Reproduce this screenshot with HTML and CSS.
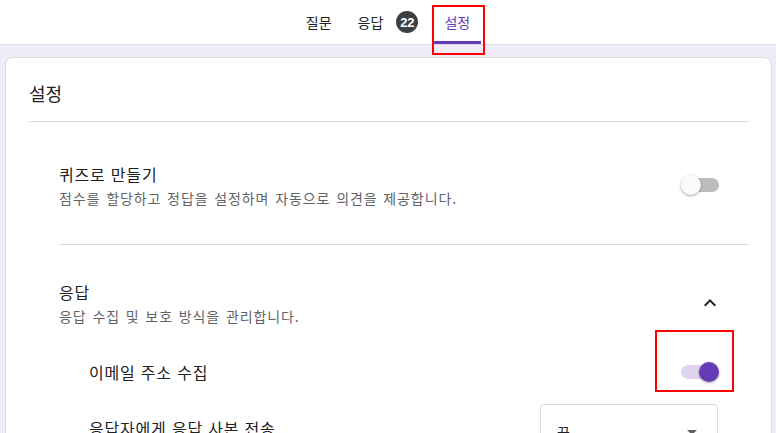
FILE: index.html
```html
<!DOCTYPE html>
<html lang="ko">
<head>
    <meta charset="UTF-8">
    <meta name="viewport" content="width=device-width, initial-scale=1.0">
    <title>설정</title>
    <link rel="stylesheet" href="styles.css">
</head>
<body>
    <header class="tabbar">
      <a class="tab" href="#">질문</a>
      <a class="tab" href="#">응답<span class="badge">22</span></a>
      <a class="tab active" href="#">설정<span class="mark markTab"></span></a>
    </header>

    <main class="page">
      <div class="card">
        <h2 class="cardTitle">설정</h2>

        <section class="section">
          <div class="row">
            <div class="rowText">
              <div class="rowTitle">퀴즈로 만들기</div>
              <div class="rowDesc">점수를 할당하고 정답을 설정하며 자동으로 의견을 제공합니다.</div>
            </div>
            <span class="switch"></span>
          </div>
        </section>

        <section class="section sectionLast">
          <div class="row">
            <div class="rowText">
              <div class="rowTitle">응답</div>
              <div class="rowDesc">응답 수집 및 보호 방식을 관리합니다.</div>
            </div>
            <svg class="chevron" width="24" height="24" viewBox="0 0 24 24">
              <path d="M7.41 15.41 12 10.83l4.59 4.58L18 14l-6-6-6 6z" fill="#202124"/>
            </svg>
          </div>

          <div class="subRow subRowFirst">
            <span class="subTitle">이메일 주소 수집</span>
            <span class="switch on"><span class="mark markSwitch"></span></span>
          </div>

          <div class="subRow">
            <span class="subTitle">응답자에게 응답 사본 전송</span>
            <div class="select">
              <span>끔</span>
              <span class="caret"></span>
            </div>
          </div>
        </section>
      </div>
    </main>
</body>
</html>
```

FILE: styles.css
```css
* {
    box-sizing: border-box;
}

html, body {
    height: 100%;
}

body {
    margin: 0;
    overflow: hidden;
    font-family: "Noto Sans CJK KR", "Noto Sans", sans-serif;
    color: #202124;
    background-color: #f0ebf8;
}

.tabbar {
    height: 45px;
    display: flex;
    justify-content: center;
    gap: 4px;
    background-color: #fff;
    border-bottom: 1px solid #dadce0;
}

.tab {
    position: relative;
    display: flex;
    align-items: center;
    padding: 0 11px;
    font-size: 14px;
    color: #202124;
    text-decoration: none;
    border-bottom: 3px solid transparent;
    padding-top: 3px;
}

.tab.active {
    color: #673ab7;
    border-bottom-color: #673ab7;
}

.badge {
    display: inline-flex;
    align-items: center;
    justify-content: center;
    width: 22px;
    height: 22px;
    margin-left: 13px;
    border-radius: 50%;
    background-color: #3c4043;
    color: #fff;
    font-family: "Liberation Sans", Arial, sans-serif;
    font-weight: bold;
    font-size: 13px;
}

.mark {
    position: absolute;
    border: 2px solid #f00;
}

.markTab {
    left: -1px;
    right: -4px;
    top: 5px;
    bottom: -14px;
}

.page {
    padding: 12px 4px 0 5px;
}

.card {
    background-color: #fff;
    border: 1px solid #dadce0;
    border-radius: 8px;
    padding: 23px 22px 0 23px;
    height: 400px;
}

.cardTitle {
    margin: 0;
    font-size: 18px;
    font-weight: normal;
    line-height: 24px;
    padding-bottom: 16px;
    border-bottom: 1px solid #dadce0;
}

.section {
    margin-left: 30px;
    padding: 40px 30px 36px 0;
    border-bottom: 1px solid #dadce0;
}

.sectionLast {
    padding-top: 35px;
    border-bottom: none;
}

.row {
    display: flex;
    align-items: center;
    justify-content: space-between;
}

.rowTitle {
    font-size: 16px;
    line-height: 24px;
    letter-spacing: 0.8px;
}

.rowDesc {
    margin-top: 2px;
    font-size: 14px;
    line-height: 20px;
    letter-spacing: 0.9px;
    word-spacing: 1px;
    color: #5f6368;
}

.chevron {
    margin-right: -3px;
}

.switch {
    position: relative;
    display: inline-block;
    width: 38px;
    height: 20px;
}

.switch::before {
    content: "";
    position: absolute;
    left: 4px;
    right: 0;
    top: 3px;
    height: 14px;
    border-radius: 7px;
    background-color: #bdbdbd;
}

.switch::after {
    content: "";
    position: absolute;
    left: 0;
    top: 0;
    width: 20px;
    height: 20px;
    border-radius: 50%;
    background-color: #fafafa;
    box-shadow: 0 1px 3px rgba(0, 0, 0, 0.35);
}

.switch.on::before {
    left: 0;
    right: 4px;
    background-color: #ddd4ee;
}

.switch.on::after {
    left: auto;
    right: 0;
    background-color: #673ab7;
}

.markSwitch {
    left: -26px;
    right: -15px;
    top: -32px;
    bottom: -10px;
}

.subRow {
    display: flex;
    align-items: center;
    justify-content: space-between;
    height: 48px;
    margin-top: 8px;
    padding-left: 30px;
}

.subRowFirst {
    margin-top: 22px;
}

.subTitle {
    font-size: 16px;
    letter-spacing: 0.8px;
}

.select {
    display: flex;
    align-items: center;
    justify-content: space-between;
    width: 178px;
    height: 56px;
    margin-top: 8px;
    margin-right: 1px;
    padding: 0 20px 0 16px;
    border: 1px solid #dadce0;
    border-radius: 4px;
    font-size: 14px;
}

.caret {
    width: 0;
    height: 0;
    border-left: 5px solid transparent;
    border-right: 5px solid transparent;
    border-top: 5px solid #5f6368;
}
```
